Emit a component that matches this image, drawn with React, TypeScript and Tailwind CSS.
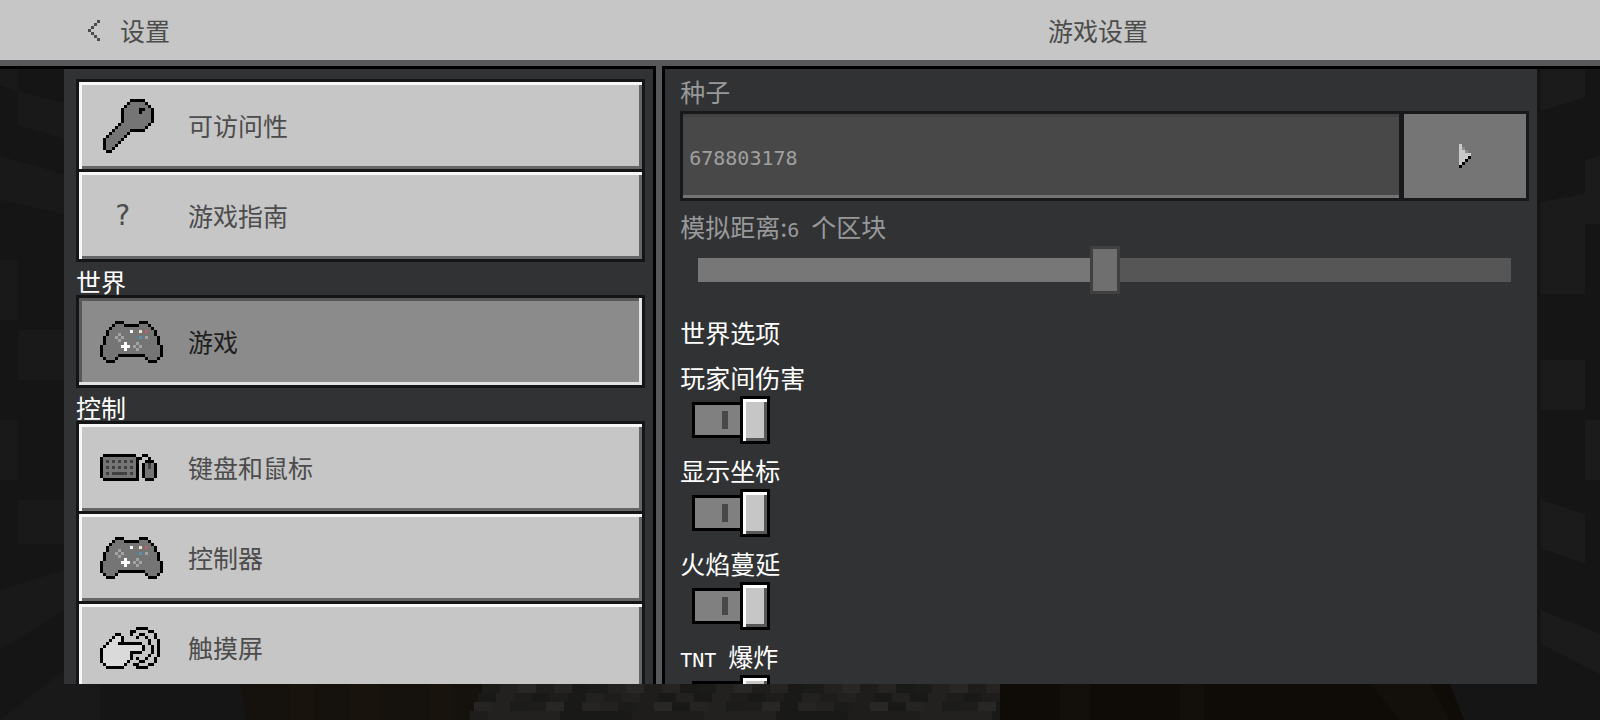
import { CSSProperties, ReactNode, useState } from 'react';
import clsx from 'clsx';

const PALETTE: Record<string, string> = {
  '#': '#000000',
  g: '#757575',
  d: '#404040',
  l: '#a3a3a3',
  h: '#dadada',
  w: '#ffffff',
  y: '#efe3c4',
  r: '#b8626f',
  b: '#4f93b5',
  t: '#4c4c4c',
  p: '#c9c9c9',
  m: '#8d8d8d',
};

const KEY = [
  '..........#####...',
  '.........#ggggg#..',
  '........#ggggggg#.',
  '.......#ggggg##gg#',
  '.......#ggggg#ggg#',
  '.......#ggggggggg#',
  '.......#ggggggggg#',
  '.......#ggggggggg#',
  '......#ggggggggg#.',
  '.....#ggggggggg#..',
  '....#ggggg#####...',
  '...#ggggg#........',
  '..#ggggg#.........',
  '.#ggggg#..........',
  '.#gggg#...........',
  '.#ggg#............',
  '.#gg#.............',
  '..##..............',
];

const CONTROLLER = [
  '.....###.....###.....',
  '....#ggg#####ggg#....',
  '...#ggggggggggggg#...',
  '..#gggggggwggygrgg#..',
  '..#ggglggggggggggg#..',
  '.#ggglglgggggbglggg#.',
  '.#gggglgggggggggggg#.',
  '.#ggggggwggglgggggg#.',
  '#ggggggwwwglglgggggg#',
  '#gggggggwggglggggggg#',
  '#ggggggggggggggggggg#',
  '#ggggg#########ggggg#',
  '.#ggg#.........#ggg#.',
  '..###...........###..',
];

const KEYBOARD = [
  '.###########..##...',
  '#ggggggggggg##..#..',
  '#gdgdgdgdgdg#..###.',
  '#ggggggggggg#.#gdg#',
  '#gdgdgdgdgdg#.#gdg#',
  '#ggggggggggg#.#ggg#',
  '#gdgdddddgdg#.#ggg#',
  '#ggggggggggg#.#ggg#',
  '.############..###.',
];

const TOUCH = [
  '............####....',
  '..........##....##..',
  '.....##...#..##...#.',
  '....#hh#....#..#..#.',
  '...#hhh#........#..#',
  '..#hhh########..#..#',
  '.#hhhhhhhhhhhh#..#.#',
  '#hhhhhhhhhhhhh#..#.#',
  '#hhhhhhhhh####...#.#',
  '#hhhhhhhhh#.....#..#',
  '#hhhhhhhhh#.#..#..#.',
  '#hhhhhhhh#...##...#.',
  '.#hhhhhh#..##...##..',
  '..######....####....',
];

const CHEVRON = ['...t', '..t.', '.t..', 't...', '.t..', '..t.', '...t'];

const PLAY = ['p...', 'pm..', 'ppm.', 'pppp', 'ppp#', 'pp#.', 'p#..', '#...'];

const PixelIcon = ({ rows }: { rows: string[] }) => {
  const width = rows[0].length;
  return (
    <svg
      width={width * 3}
      height={rows.length * 3}
      viewBox={`0 0 ${width} ${rows.length}`}
      shapeRendering="crispEdges"
      aria-hidden="true"
    >
      {rows.map((row, y) =>
        [...row].map((cell, x) =>
          PALETTE[cell] ? (
            <rect key={`${x}-${y}`} x={x} y={y} width="1" height="1" fill={PALETTE[cell]} />
          ) : null
        )
      )}
    </svg>
  );
};

const STONES = ['#1b1b1a', '#222120', '#282725', '#1e1d1c', '#252422', '#191918'];

const Backdrop = () => {
  const stones = [];
  for (let row = 0; row < 4; row++) {
    for (let col = 0; col < 30; col++) {
      const x = 482 + col * 18 - row * 4;
      const shade = STONES[(col * 7 + row * 5 + ((col * row) % 4)) % STONES.length];
      stones.push(
        <rect key={`${row}-${col}`} x={x} y={684 + row * 9} width="18" height="9" fill={shade} />
      );
    }
  }

  return (
    <svg
      className="absolute inset-0 h-full w-full"
      viewBox="0 0 1600 720"
      preserveAspectRatio="none"
      aria-hidden="true"
    >
      <rect width="1600" height="720" fill="#151515" />
      <path
        d="M0 69h18v22L0 86zM18 91l46 12v36l-46-14zM0 156l64 18v40L0 200zM0 260h18v60H0zM18 330h46v50H18zM0 420h18v60H0zM18 500h46v44H18zM0 590l64-20v40L0 650z"
        fill="#191919"
      />
      <path
        d="M1541 69h44v28l-44 14zM1585 160l15-4v68h-15zM1541 202l44-8v100h-44zM1541 360h44v50h-44zM1585 420h15v60h-15zM1541 500l44 14v50l-44-16zM1541 610l59 24v40l-59-30z"
        fill="#1b1b1b"
      />
      <path d="M0 720l64-50h36v50z" fill="#191919" />
      <path d="M240 684h250l-20 36H246z" fill="#15120e" />
      <path d="M290 684h24v36h-24zM350 684h30v36h-30zM430 684h22v36h-22z" fill="#18130d" />
      {stones}
      <path d="M1000 684h450l14 36h-464z" fill="#0f0c08" />
      <path d="M1060 684h30v36h-30zM1180 684h24v36h-24zM1370 684h60l20 36h-50z" fill="#130f0a" />
    </svg>
  );
};

interface MenuButtonProps {
  label: string;
  icon: ReactNode;
  active: boolean;
  onClick: () => void;
}

const MenuButton = ({ label, icon, active, onClick }: MenuButtonProps) => (
  <button
    className={clsx(
      'flex h-[93px] w-full shrink-0 items-center border-3 border-[#141516] pl-[21px] text-left text-[25px] leading-6',
      active
        ? 'bg-[#8b8b8b] text-[#1e1e1e] shadow-[inset_-3px_-3px_0_#e3e3e3,inset_3px_3px_0_#585858]'
        : 'bg-[#c6c6c6] text-[#4c4c4c] shadow-[inset_3px_3px_0_#f7f7f7,inset_-3px_-3px_0_#656565]'
    )}
    aria-current={active ? 'page' : undefined}
    onClick={onClick}
  >
    <span className="flex w-[88px]">{icon}</span>
    <span className="pb-0.5">{label}</span>
  </button>
);

interface ToggleProps {
  id: string;
  label: ReactNode;
}

const Toggle = ({ id, label }: ToggleProps) => {
  const [checked, setChecked] = useState(true);

  return (
    <div className="flex flex-col items-start gap-[7px]">
      <label htmlFor={id} className="h-6 leading-6">
        {label}
      </label>
      <div
        className={clsx('relative ml-3 flex h-12 items-center', !checked && 'flex-row-reverse')}
      >
        <span
          className={clsx(
            'flex h-9 w-12 items-center border-y-3 border-black bg-[#808080]',
            checked ? 'justify-end border-l-3 pr-3' : 'border-r-3 pl-3'
          )}
        >
          <span className="h-[18px] w-1.5 bg-[#484848]" />
        </span>
        <span className="h-12 w-[30px] border-3 border-black bg-[#c6c6c6] shadow-[inset_3px_3px_0_#ffffff,inset_-3px_-3px_0_#585858]" />
        <input
          id={id}
          type="checkbox"
          role="switch"
          className="absolute inset-0 cursor-pointer opacity-0"
          checked={checked}
          onChange={(e) => setChecked(e.target.checked)}
        />
      </div>
    </div>
  );
};

const SECTIONS = [
  {
    title: '',
    items: [
      { label: '可访问性', icon: <PixelIcon rows={KEY} /> },
      {
        label: '游戏指南',
        icon: <span className="pl-3.5 font-['DejaVu_Sans_Mono',monospace] text-[28px]">?</span>,
      },
    ],
  },
  { title: '世界', items: [{ label: '游戏', icon: <PixelIcon rows={CONTROLLER} /> }] },
  {
    title: '控制',
    items: [
      { label: '键盘和鼠标', icon: <PixelIcon rows={KEYBOARD} /> },
      { label: '控制器', icon: <PixelIcon rows={CONTROLLER} /> },
      { label: '触摸屏', icon: <PixelIcon rows={TOUCH} /> },
    ],
  },
];

const App = () => {
  const [page, setPage] = useState('游戏');
  const [distance, setDistance] = useState(6);
  const fill = ((distance - 4) / 4) * 100;

  return (
    <div className="relative flex h-screen flex-col overflow-hidden bg-[#151515] pb-9 font-['Noto_Sans_CJK_SC',sans-serif] text-[25px] text-white">
      <Backdrop />
      <header className="relative flex h-[66px] shrink-0 items-center border-b-6 border-[#58585a] bg-[#c6c6c6] pr-[63px] pl-16 text-[#4c4c4c]">
        <div className="w-2/5 pl-6">
          <button className="flex items-center gap-5 leading-6">
            <PixelIcon rows={CHEVRON} />
            设置
          </button>
        </div>
        <h1 className="flex-1 pl-1.5 text-center leading-6">游戏设置</h1>
      </header>
      <div className="relative h-[3px] shrink-0 bg-black" />

      <main className="relative flex min-h-0 flex-1 pr-[63px] pl-16">
        <nav
          aria-label="设置"
          className="w-2/5 overflow-y-auto bg-[#313233] pt-[10px] pr-2 pl-3 [scrollbar-width:none]"
        >
          {SECTIONS.map(({ title, items }) => (
            <section key={title}>
              {title && <h2 className="pt-[7px] pb-0.5 leading-6">{title}</h2>}
              <div className="flex flex-col -space-y-[3px]">
                {items.map(({ label, icon }) => (
                  <MenuButton
                    key={label}
                    label={label}
                    icon={icon}
                    active={label === page}
                    onClick={() => setPage(label)}
                  />
                ))}
              </div>
            </section>
          ))}
        </nav>

        <div className="-mt-[3px] w-3 shrink-0 border-x-3 border-black bg-[#58585a]" />

        <div className="min-w-0 flex-1 overflow-y-auto bg-[#313233] pt-[10px] pr-2 pl-[15px] [scrollbar-width:none]">
          <label htmlFor="seed" className="block h-6 leading-6 text-[#98999b]">
            种子
          </label>
          <div className="mt-2 flex h-[90px]">
            <input
              id="seed"
              className="min-w-0 flex-1 border-3 border-r-0 border-[#18191a] bg-[#484848] pt-1 pl-1.5 font-['DejaVu_Sans_Mono',monospace] text-xl text-[#a0a0a0] shadow-[inset_0_-3px_0_#747474,inset_0_3px_0_#414141] outline-none"
              value="678803178"
              readOnly
            />
            <button
              aria-label="选择种子"
              className="flex w-[130px] shrink-0 items-center justify-center border-3 border-l-5 border-[#18191a] bg-[#757575]"
            >
              <PixelIcon rows={PLAY} />
            </button>
          </div>

          <label htmlFor="distance" className="mt-[13px] block h-6 leading-6 text-[#98999b]">
            模拟距离:
            <span className="font-['DejaVu_Sans_Mono',monospace] text-xl leading-none whitespace-pre">
              {distance}{' '}
            </span>
            个区块
          </label>
          <div className="mt-2 flex px-[18px]">
            <input
              id="distance"
              type="range"
              min={4}
              max={8}
              value={distance}
              onChange={(e) => setDistance(Number(e.target.value))}
              className="h-12 w-full appearance-none bg-[linear-gradient(#777777,#777777),linear-gradient(#565656,#565656)] bg-[length:var(--fill)_24px,100%_24px] bg-left bg-no-repeat outline-none [&::-webkit-slider-thumb]:h-12 [&::-webkit-slider-thumb]:w-[30px] [&::-webkit-slider-thumb]:appearance-none [&::-webkit-slider-thumb]:border-3 [&::-webkit-slider-thumb]:border-[#404040] [&::-webkit-slider-thumb]:bg-[#6f6f6f]"
              style={{ '--fill': `${fill}%` } as CSSProperties}
            />
          </div>

          <h2 className="mt-[26px] leading-6">世界选项</h2>
          <div className="mt-[21px] flex flex-col gap-[14px] pb-4">
            <Toggle id="pvp" label="玩家间伤害" />
            <Toggle id="coordinates" label="显示坐标" />
            <Toggle id="fire" label="火焰蔓延" />
            <Toggle
              id="tnt"
              label={
                <>
                  <span className="font-['DejaVu_Sans_Mono',monospace] text-xl leading-none whitespace-pre">
                    TNT{' '}
                  </span>
                  爆炸
                </>
              }
            />
          </div>
        </div>
      </main>
    </div>
  );
};

export default App;
